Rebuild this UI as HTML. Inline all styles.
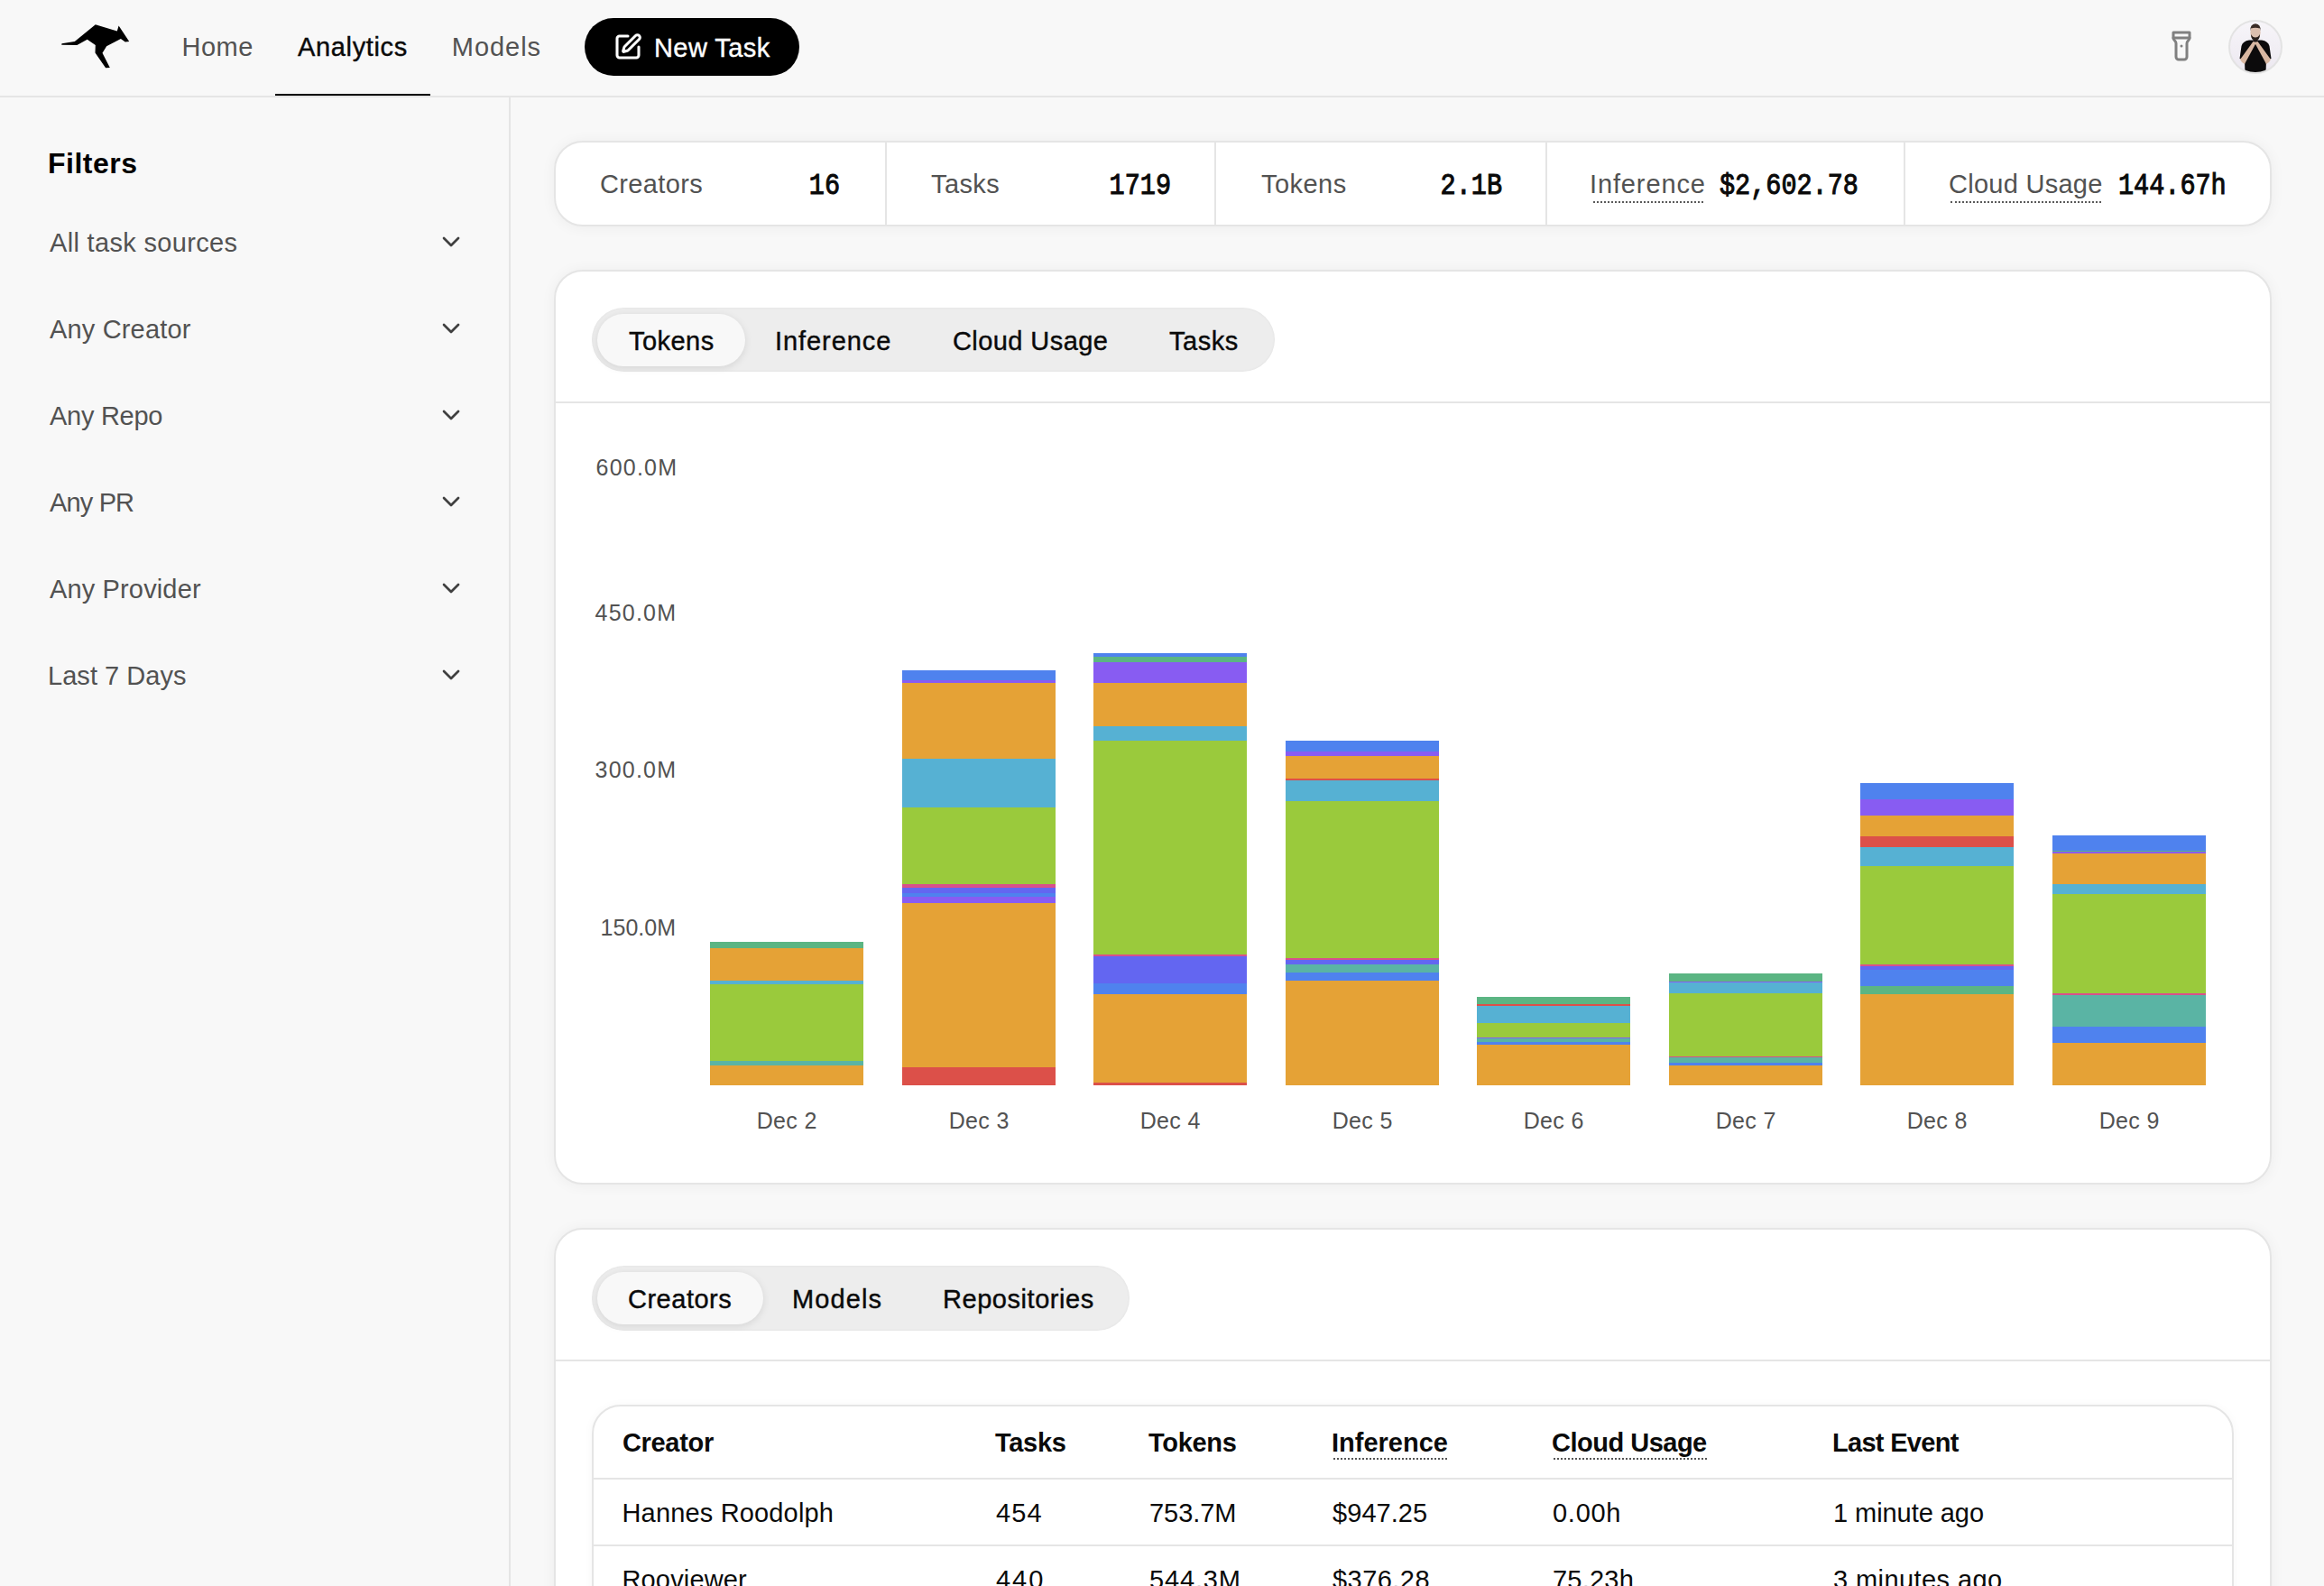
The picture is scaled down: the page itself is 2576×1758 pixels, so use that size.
<!DOCTYPE html>
<html><head><meta charset="utf-8"><style>
html,body{margin:0;padding:0;width:2576px;height:1758px;overflow:hidden;background:#f8f8f8;}
body{position:relative;font-family:'Liberation Sans', sans-serif;}
.t{position:absolute;white-space:nowrap;}
</style></head><body>
<div style="position:absolute;left:0px;top:106px;width:2576px;height:2px;background:#e5e5e5"></div>
<div style="position:absolute;left:564px;top:108px;width:2px;height:1650px;background:#e5e5e5"></div>
<svg style="position:absolute;left:0;top:0" width="200" height="100" viewBox="0 0 200 100"><path fill="#000" d="M68.1 49.2 L68.6 48.2 L82.8 45.9 L105.8 27.3 L129.8 34.5 L131.6 28.6 L143.2 46.1 L138.8 46.6 L133.9 43 L118.1 51.3 L113.5 58.8 L121.8 75 L117.1 75.3 L105.5 58.5 L105.8 50 L96.7 43.8 L85.4 50 L68.6 49.8 Z"/></svg>
<div class="t" style="left:201.5px;top:38.45px;font-size:29px;line-height:29px;color:#525252;font-weight:400;font-family:'Liberation Sans', sans-serif;letter-spacing:0.47px;">Home</div>
<div class="t" style="left:330px;top:38.45px;font-size:29px;line-height:29px;color:#0a0a0a;font-weight:400;font-family:'Liberation Sans', sans-serif;-webkit-text-stroke:0.4px #0a0a0a;letter-spacing:0.65px;">Analytics</div>
<div class="t" style="left:500.8px;top:38.45px;font-size:29px;line-height:29px;color:#525252;font-weight:400;font-family:'Liberation Sans', sans-serif;letter-spacing:0.96px;">Models</div>
<div style="position:absolute;left:305px;top:104px;width:172px;height:2px;background:#000"></div>
<div style="position:absolute;left:648px;top:20px;width:238px;height:64px;background:#000;border-radius:32px"></div>
<svg style="position:absolute;left:680px;top:36px" width="32" height="32" viewBox="0 0 24 24" fill="none" stroke="#fff" stroke-width="2.3" stroke-linecap="round" stroke-linejoin="round"><path d="M12 3H5a2 2 0 0 0-2 2v14a2 2 0 0 0 2 2h14a2 2 0 0 0 2-2v-7"/><path d="M18.375 2.625a1 1 0 0 1 3 3l-9.013 9.014a2 2 0 0 1-.853.505l-2.873.84a.5.5 0 0 1-.62-.62l.84-2.873a2 2 0 0 1 .506-.852z"/></svg>
<div class="t" style="left:725px;top:39.15px;font-size:29px;line-height:29px;color:#fff;font-weight:400;font-family:'Liberation Sans', sans-serif;-webkit-text-stroke:0.4px #fff;letter-spacing:0.43px;">New Task</div>
<svg style="position:absolute;left:2400px;top:33px" width="36" height="36" viewBox="0 0 24 24" fill="none" stroke="#808080" stroke-width="2" stroke-linecap="round" stroke-linejoin="round"><path d="M18 6c0 2-2 2-2 4v10a2 2 0 0 1-2 2h-4a2 2 0 0 1-2-2V10c0-2-2-2-2-4V2h12z"/><line x1="6" x2="18" y1="6" y2="6"/><line x1="12" x2="12" y1="12" y2="12"/></svg>
<svg style="position:absolute;left:2470px;top:22px" width="60" height="60" viewBox="0 0 60 60">
<defs><clipPath id="ac"><circle cx="30" cy="30" r="29"/></clipPath>
<linearGradient id="ag" x1="0" y1="0" x2="0" y2="1"><stop offset="0" stop-color="#f7f5f9"/><stop offset="1" stop-color="#ece8f0"/></linearGradient></defs>
<circle cx="30" cy="30" r="29" fill="url(#ag)"/>
<g clip-path="url(#ac)">
<path d="M14.5 29 Q16 23.5 23 22.5 L37 22.5 Q44 23.5 45.5 29 L47.5 43 L42 44.5 L41.5 60 L18.5 60 L18 44.5 L12.5 43 Z" fill="#0c0b0c"/>
<path d="M13 44 L27.5 24 L31 25 L18 49 Q15 48 13 44 Z" fill="#d9b8a2"/>
<path d="M47 44 L32.5 24 L29 25 L42 49 Q45 48 47 44 Z" fill="#d9b8a2"/>
<ellipse cx="30" cy="14" rx="5.6" ry="8.6" fill="#dcbfae"/>
<path d="M24.2 12.5 Q24 4.5 30 4.2 Q36 4.5 35.8 12.5 L35 9.5 Q30 8 25 9.5 Z" fill="#3a2c26"/>
<path d="M25 16 Q25 22.5 30 23.5 Q35 22.5 35 16 Q33 19.5 30 19.5 Q27 19.5 25 16 Z" fill="#2a201c"/>
</g>
<circle cx="30" cy="30" r="29" fill="none" stroke="#e3e3e3" stroke-width="2"/>
</svg>
<div class="t" style="left:53px;top:165.41px;font-size:32px;line-height:32px;color:#000;font-weight:700;font-family:'Liberation Sans', sans-serif;letter-spacing:0.5px;">Filters</div>
<div class="t" style="left:55px;top:255.05px;font-size:29px;line-height:29px;color:#525252;font-weight:400;font-family:'Liberation Sans', sans-serif;letter-spacing:0.33px;">All task sources</div>
<svg style="position:absolute;left:484px;top:252px" width="32" height="32" viewBox="0 0 24 24" fill="none" stroke="#404040" stroke-width="2" stroke-linecap="round" stroke-linejoin="round"><path d="m6 9 6 6 6-6"/></svg>
<div class="t" style="left:55px;top:351.05px;font-size:29px;line-height:29px;color:#525252;font-weight:400;font-family:'Liberation Sans', sans-serif;letter-spacing:0.16px;">Any Creator</div>
<svg style="position:absolute;left:484px;top:348px" width="32" height="32" viewBox="0 0 24 24" fill="none" stroke="#404040" stroke-width="2" stroke-linecap="round" stroke-linejoin="round"><path d="m6 9 6 6 6-6"/></svg>
<div class="t" style="left:55px;top:447.05px;font-size:29px;line-height:29px;color:#525252;font-weight:400;font-family:'Liberation Sans', sans-serif;letter-spacing:-0.28px;">Any Repo</div>
<svg style="position:absolute;left:484px;top:444px" width="32" height="32" viewBox="0 0 24 24" fill="none" stroke="#404040" stroke-width="2" stroke-linecap="round" stroke-linejoin="round"><path d="m6 9 6 6 6-6"/></svg>
<div class="t" style="left:55px;top:543.05px;font-size:29px;line-height:29px;color:#525252;font-weight:400;font-family:'Liberation Sans', sans-serif;letter-spacing:-0.85px;">Any PR</div>
<svg style="position:absolute;left:484px;top:540px" width="32" height="32" viewBox="0 0 24 24" fill="none" stroke="#404040" stroke-width="2" stroke-linecap="round" stroke-linejoin="round"><path d="m6 9 6 6 6-6"/></svg>
<div class="t" style="left:55px;top:639.05px;font-size:29px;line-height:29px;color:#525252;font-weight:400;font-family:'Liberation Sans', sans-serif;letter-spacing:0.14px;">Any Provider</div>
<svg style="position:absolute;left:484px;top:636px" width="32" height="32" viewBox="0 0 24 24" fill="none" stroke="#404040" stroke-width="2" stroke-linecap="round" stroke-linejoin="round"><path d="m6 9 6 6 6-6"/></svg>
<div class="t" style="left:53px;top:735.05px;font-size:29px;line-height:29px;color:#525252;font-weight:400;font-family:'Liberation Sans', sans-serif;letter-spacing:0.04px;">Last 7 Days</div>
<svg style="position:absolute;left:484px;top:732px" width="32" height="32" viewBox="0 0 24 24" fill="none" stroke="#404040" stroke-width="2" stroke-linecap="round" stroke-linejoin="round"><path d="m6 9 6 6 6-6"/></svg>
<div style="position:absolute;left:614px;top:156px;width:1904px;height:95px;background:#fff;border:2px solid #e5e5e5;border-radius:32px;box-sizing:border-box;box-shadow:0 1px 16px rgba(0,0,0,0.05)"></div>
<div style="position:absolute;left:981px;top:157px;width:2px;height:93px;background:#e5e5e5"></div>
<div style="position:absolute;left:1346px;top:157px;width:2px;height:93px;background:#e5e5e5"></div>
<div style="position:absolute;left:1713px;top:157px;width:2px;height:93px;background:#e5e5e5"></div>
<div style="position:absolute;left:2110px;top:157px;width:2px;height:93px;background:#e5e5e5"></div>
<div class="t" style="left:665px;top:190.45px;font-size:29px;line-height:29px;color:#525252;font-weight:400;font-family:'Liberation Sans', sans-serif;letter-spacing:0.37px;">Creators</div>
<div class="t" style="left:1032px;top:190.45px;font-size:29px;line-height:29px;color:#525252;font-weight:400;font-family:'Liberation Sans', sans-serif;letter-spacing:0.4px;">Tasks</div>
<div class="t" style="left:1398px;top:190.45px;font-size:29px;line-height:29px;color:#525252;font-weight:400;font-family:'Liberation Sans', sans-serif;letter-spacing:0.46px;">Tokens</div>
<div class="t" style="left:1762px;top:190.45px;font-size:29px;line-height:29px;color:#525252;font-weight:400;font-family:'Liberation Sans', sans-serif;letter-spacing:0.87px;">Inference</div>
<div class="t" style="left:2160px;top:190.45px;font-size:29px;line-height:29px;color:#525252;font-weight:400;font-family:'Liberation Sans', sans-serif;letter-spacing:0.27px;">Cloud Usage</div>
<div style="position:absolute;left:1766px;top:223px;width:122px;height:2px;border-top:2px dotted #5a5a5a;box-sizing:border-box"></div>
<div style="position:absolute;left:2162px;top:223px;width:167px;height:2px;border-top:2px dotted #5a5a5a;box-sizing:border-box"></div>
<div class="t" style="right:1645px;top:194.17px;font-size:28.5px;line-height:28.5px;color:#0a0a0a;font-weight:400;font-family:'Liberation Mono', monospace;-webkit-text-stroke:0.9px #0a0a0a;transform:scaleY(1.155);transform-origin:0 21.83px;">16</div>
<div class="t" style="right:1278px;top:194.17px;font-size:28.5px;line-height:28.5px;color:#0a0a0a;font-weight:400;font-family:'Liberation Mono', monospace;-webkit-text-stroke:0.9px #0a0a0a;transform:scaleY(1.155);transform-origin:0 21.83px;">1719</div>
<div class="t" style="right:911px;top:194.17px;font-size:28.5px;line-height:28.5px;color:#0a0a0a;font-weight:400;font-family:'Liberation Mono', monospace;-webkit-text-stroke:0.9px #0a0a0a;transform:scaleY(1.155);transform-origin:0 21.83px;">2.1B</div>
<div class="t" style="left:1906px;top:194.17px;font-size:28.5px;line-height:28.5px;color:#0a0a0a;font-weight:400;font-family:'Liberation Mono', monospace;-webkit-text-stroke:0.9px #0a0a0a;transform:scaleY(1.155);transform-origin:0 21.83px;">$2,602.78</div>
<div class="t" style="left:2348px;top:194.17px;font-size:28.5px;line-height:28.5px;color:#0a0a0a;font-weight:400;font-family:'Liberation Mono', monospace;-webkit-text-stroke:0.9px #0a0a0a;transform:scaleY(1.155);transform-origin:0 21.83px;">144.67h</div>
<div style="position:absolute;left:614px;top:299px;width:1904px;height:1014px;background:#fff;border:2px solid #e5e5e5;border-radius:32px;box-sizing:border-box;box-shadow:0 1px 16px rgba(0,0,0,0.05)"></div>
<div style="position:absolute;left:614px;top:445px;width:1904px;height:2px;background:#e5e5e5"></div>
<div style="position:absolute;left:656px;top:341px;width:757px;height:71px;background:#ededed;border-radius:36px;box-shadow:inset 0 0 3px rgba(0,0,0,0.06)"></div>
<div style="position:absolute;left:662px;top:348px;width:164px;height:58px;background:#f8f8f8;border-radius:29px;box-shadow:0 2px 9px rgba(0,0,0,0.10)"></div>
<div class="t" style="left:697px;top:364.05px;font-size:29px;line-height:29px;color:#0a0a0a;font-weight:400;font-family:'Liberation Sans', sans-serif;-webkit-text-stroke:0.4px #0a0a0a;letter-spacing:0.46px;">Tokens</div>
<div class="t" style="left:859px;top:364.05px;font-size:29px;line-height:29px;color:#0a0a0a;font-weight:400;font-family:'Liberation Sans', sans-serif;-webkit-text-stroke:0.4px #0a0a0a;letter-spacing:0.92px;">Inference</div>
<div class="t" style="left:1056px;top:364.05px;font-size:29px;line-height:29px;color:#0a0a0a;font-weight:400;font-family:'Liberation Sans', sans-serif;-webkit-text-stroke:0.4px #0a0a0a;letter-spacing:0.42px;">Cloud Usage</div>
<div class="t" style="left:1296px;top:364.05px;font-size:29px;line-height:29px;color:#0a0a0a;font-weight:400;font-family:'Liberation Sans', sans-serif;-webkit-text-stroke:0.4px #0a0a0a;letter-spacing:0.52px;">Tasks</div>
<div class="t" style="right:1824.8px;top:506.44px;font-size:25px;line-height:25px;color:#525252;font-weight:400;font-family:'Liberation Sans', sans-serif;letter-spacing:1.2px;">600.0M</div>
<div class="t" style="right:1825.8px;top:667.24px;font-size:25px;line-height:25px;color:#525252;font-weight:400;font-family:'Liberation Sans', sans-serif;letter-spacing:1.2px;">450.0M</div>
<div class="t" style="right:1825.8px;top:841.24px;font-size:25px;line-height:25px;color:#525252;font-weight:400;font-family:'Liberation Sans', sans-serif;letter-spacing:1.2px;">300.0M</div>
<div class="t" style="right:1827px;top:1015.84px;font-size:25px;line-height:25px;color:#525252;font-weight:400;font-family:'Liberation Sans', sans-serif;letter-spacing:0px;">150.0M</div>
<div style="position:absolute;left:787px;top:1044px;width:170px;height:7px;background:#5bb583"></div>
<div style="position:absolute;left:787px;top:1051px;width:170px;height:36px;background:#e5a236"></div>
<div style="position:absolute;left:787px;top:1087px;width:170px;height:4px;background:#56b1d3"></div>
<div style="position:absolute;left:787px;top:1091px;width:170px;height:85px;background:#9aca3c"></div>
<div style="position:absolute;left:787px;top:1176px;width:170px;height:5px;background:#5ab4a4"></div>
<div style="position:absolute;left:787px;top:1181px;width:170px;height:22px;background:#e5a236"></div>
<div style="position:absolute;left:1000px;top:743px;width:170px;height:11px;background:#4f82ee"></div>
<div style="position:absolute;left:1000px;top:754px;width:170px;height:3px;background:#885cf2"></div>
<div style="position:absolute;left:1000px;top:757px;width:170px;height:84px;background:#e5a236"></div>
<div style="position:absolute;left:1000px;top:841px;width:170px;height:54px;background:#56b1d3"></div>
<div style="position:absolute;left:1000px;top:895px;width:170px;height:85px;background:#9aca3c"></div>
<div style="position:absolute;left:1000px;top:980px;width:170px;height:4px;background:#d9508a"></div>
<div style="position:absolute;left:1000px;top:984px;width:170px;height:6px;background:#6366f1"></div>
<div style="position:absolute;left:1000px;top:990px;width:170px;height:4px;background:#4f82ee"></div>
<div style="position:absolute;left:1000px;top:994px;width:170px;height:7px;background:#885cf2"></div>
<div style="position:absolute;left:1000px;top:1001px;width:170px;height:182px;background:#e5a236"></div>
<div style="position:absolute;left:1000px;top:1183px;width:170px;height:20px;background:#dc5049"></div>
<div style="position:absolute;left:1212px;top:724px;width:170px;height:4px;background:#4f82ee"></div>
<div style="position:absolute;left:1212px;top:728px;width:170px;height:6px;background:#5bb583"></div>
<div style="position:absolute;left:1212px;top:734px;width:170px;height:23px;background:#885cf2"></div>
<div style="position:absolute;left:1212px;top:757px;width:170px;height:48px;background:#e5a236"></div>
<div style="position:absolute;left:1212px;top:805px;width:170px;height:16px;background:#56b1d3"></div>
<div style="position:absolute;left:1212px;top:821px;width:170px;height:237px;background:#9aca3c"></div>
<div style="position:absolute;left:1212px;top:1058px;width:170px;height:2px;background:#d9508a"></div>
<div style="position:absolute;left:1212px;top:1060px;width:170px;height:30px;background:#6366f1"></div>
<div style="position:absolute;left:1212px;top:1090px;width:170px;height:12px;background:#4f82ee"></div>
<div style="position:absolute;left:1212px;top:1102px;width:170px;height:98px;background:#e5a236"></div>
<div style="position:absolute;left:1212px;top:1200px;width:170px;height:3px;background:#dc5049"></div>
<div style="position:absolute;left:1425px;top:821px;width:170px;height:12px;background:#4f82ee"></div>
<div style="position:absolute;left:1425px;top:833px;width:170px;height:5px;background:#885cf2"></div>
<div style="position:absolute;left:1425px;top:838px;width:170px;height:25px;background:#e5a236"></div>
<div style="position:absolute;left:1425px;top:863px;width:170px;height:2px;background:#dc5049"></div>
<div style="position:absolute;left:1425px;top:865px;width:170px;height:23px;background:#56b1d3"></div>
<div style="position:absolute;left:1425px;top:888px;width:170px;height:174px;background:#9aca3c"></div>
<div style="position:absolute;left:1425px;top:1062px;width:170px;height:2px;background:#d9508a"></div>
<div style="position:absolute;left:1425px;top:1064px;width:170px;height:5px;background:#6366f1"></div>
<div style="position:absolute;left:1425px;top:1069px;width:170px;height:9px;background:#5ab4a4"></div>
<div style="position:absolute;left:1425px;top:1078px;width:170px;height:9px;background:#4f82ee"></div>
<div style="position:absolute;left:1425px;top:1087px;width:170px;height:116px;background:#e5a236"></div>
<div style="position:absolute;left:1637px;top:1105px;width:170px;height:8px;background:#5bb583"></div>
<div style="position:absolute;left:1637px;top:1113px;width:170px;height:2px;background:#dc5049"></div>
<div style="position:absolute;left:1637px;top:1115px;width:170px;height:19px;background:#56b1d3"></div>
<div style="position:absolute;left:1637px;top:1134px;width:170px;height:16px;background:#9aca3c"></div>
<div style="position:absolute;left:1637px;top:1150px;width:170px;height:1px;background:#885cf2"></div>
<div style="position:absolute;left:1637px;top:1151px;width:170px;height:4px;background:#5ab4a4"></div>
<div style="position:absolute;left:1637px;top:1155px;width:170px;height:3px;background:#4f82ee"></div>
<div style="position:absolute;left:1637px;top:1158px;width:170px;height:45px;background:#e5a236"></div>
<div style="position:absolute;left:1850px;top:1079px;width:170px;height:9px;background:#5bb583"></div>
<div style="position:absolute;left:1850px;top:1088px;width:170px;height:1px;background:#885cf2"></div>
<div style="position:absolute;left:1850px;top:1089px;width:170px;height:12px;background:#56b1d3"></div>
<div style="position:absolute;left:1850px;top:1101px;width:170px;height:70px;background:#9aca3c"></div>
<div style="position:absolute;left:1850px;top:1171px;width:170px;height:1px;background:#d9508a"></div>
<div style="position:absolute;left:1850px;top:1172px;width:170px;height:6px;background:#5ab4a4"></div>
<div style="position:absolute;left:1850px;top:1178px;width:170px;height:3px;background:#4f82ee"></div>
<div style="position:absolute;left:1850px;top:1181px;width:170px;height:22px;background:#e5a236"></div>
<div style="position:absolute;left:2062px;top:868px;width:170px;height:18px;background:#4f82ee"></div>
<div style="position:absolute;left:2062px;top:886px;width:170px;height:18px;background:#885cf2"></div>
<div style="position:absolute;left:2062px;top:904px;width:170px;height:23px;background:#e5a236"></div>
<div style="position:absolute;left:2062px;top:927px;width:170px;height:12px;background:#dc5049"></div>
<div style="position:absolute;left:2062px;top:939px;width:170px;height:21px;background:#56b1d3"></div>
<div style="position:absolute;left:2062px;top:960px;width:170px;height:109px;background:#9aca3c"></div>
<div style="position:absolute;left:2062px;top:1069px;width:170px;height:2px;background:#d9508a"></div>
<div style="position:absolute;left:2062px;top:1071px;width:170px;height:4px;background:#6366f1"></div>
<div style="position:absolute;left:2062px;top:1075px;width:170px;height:18px;background:#4f82ee"></div>
<div style="position:absolute;left:2062px;top:1093px;width:170px;height:9px;background:#5bb583"></div>
<div style="position:absolute;left:2062px;top:1102px;width:170px;height:101px;background:#e5a236"></div>
<div style="position:absolute;left:2275px;top:926px;width:170px;height:17px;background:#4f82ee"></div>
<div style="position:absolute;left:2275px;top:943px;width:170px;height:1px;background:#5bb583"></div>
<div style="position:absolute;left:2275px;top:944px;width:170px;height:2px;background:#885cf2"></div>
<div style="position:absolute;left:2275px;top:946px;width:170px;height:34px;background:#e5a236"></div>
<div style="position:absolute;left:2275px;top:980px;width:170px;height:11px;background:#56b1d3"></div>
<div style="position:absolute;left:2275px;top:991px;width:170px;height:110px;background:#9aca3c"></div>
<div style="position:absolute;left:2275px;top:1101px;width:170px;height:2px;background:#d9508a"></div>
<div style="position:absolute;left:2275px;top:1103px;width:170px;height:35px;background:#5ab4a4"></div>
<div style="position:absolute;left:2275px;top:1138px;width:170px;height:18px;background:#4f82ee"></div>
<div style="position:absolute;left:2275px;top:1156px;width:170px;height:47px;background:#e5a236"></div>
<div class="t" style="left:572.165px;width:600px;text-align:center;top:1229.84px;font-size:25px;line-height:25px;color:#525252;font-weight:400;font-family:'Liberation Sans', sans-serif;letter-spacing:0.33px;">Dec 2</div>
<div class="t" style="left:785.165px;width:600px;text-align:center;top:1229.84px;font-size:25px;line-height:25px;color:#525252;font-weight:400;font-family:'Liberation Sans', sans-serif;letter-spacing:0.33px;">Dec 3</div>
<div class="t" style="left:997.165px;width:600px;text-align:center;top:1229.84px;font-size:25px;line-height:25px;color:#525252;font-weight:400;font-family:'Liberation Sans', sans-serif;letter-spacing:0.33px;">Dec 4</div>
<div class="t" style="left:1210.165px;width:600px;text-align:center;top:1229.84px;font-size:25px;line-height:25px;color:#525252;font-weight:400;font-family:'Liberation Sans', sans-serif;letter-spacing:0.33px;">Dec 5</div>
<div class="t" style="left:1422.165px;width:600px;text-align:center;top:1229.84px;font-size:25px;line-height:25px;color:#525252;font-weight:400;font-family:'Liberation Sans', sans-serif;letter-spacing:0.33px;">Dec 6</div>
<div class="t" style="left:1635.165px;width:600px;text-align:center;top:1229.84px;font-size:25px;line-height:25px;color:#525252;font-weight:400;font-family:'Liberation Sans', sans-serif;letter-spacing:0.33px;">Dec 7</div>
<div class="t" style="left:1847.165px;width:600px;text-align:center;top:1229.84px;font-size:25px;line-height:25px;color:#525252;font-weight:400;font-family:'Liberation Sans', sans-serif;letter-spacing:0.33px;">Dec 8</div>
<div class="t" style="left:2060.165px;width:600px;text-align:center;top:1229.84px;font-size:25px;line-height:25px;color:#525252;font-weight:400;font-family:'Liberation Sans', sans-serif;letter-spacing:0.33px;">Dec 9</div>
<div style="position:absolute;left:614px;top:1361px;width:1904px;height:500px;background:#fff;border:2px solid #e5e5e5;border-radius:32px;box-sizing:border-box;box-shadow:0 1px 16px rgba(0,0,0,0.05)"></div>
<div style="position:absolute;left:614px;top:1507px;width:1904px;height:2px;background:#e5e5e5"></div>
<div style="position:absolute;left:656px;top:1403px;width:596px;height:72px;background:#ededed;border-radius:36px;box-shadow:inset 0 0 3px rgba(0,0,0,0.06)"></div>
<div style="position:absolute;left:662px;top:1410px;width:184px;height:58px;background:#f8f8f8;border-radius:29px;box-shadow:0 2px 9px rgba(0,0,0,0.10)"></div>
<div class="t" style="left:696px;top:1426.05px;font-size:29px;line-height:29px;color:#0a0a0a;font-weight:400;font-family:'Liberation Sans', sans-serif;-webkit-text-stroke:0.4px #0a0a0a;letter-spacing:0.51px;">Creators</div>
<div class="t" style="left:878px;top:1426.05px;font-size:29px;line-height:29px;color:#0a0a0a;font-weight:400;font-family:'Liberation Sans', sans-serif;-webkit-text-stroke:0.4px #0a0a0a;letter-spacing:1.1px;">Models</div>
<div class="t" style="left:1045px;top:1426.05px;font-size:29px;line-height:29px;color:#0a0a0a;font-weight:400;font-family:'Liberation Sans', sans-serif;-webkit-text-stroke:0.4px #0a0a0a;letter-spacing:0.55px;">Repositories</div>
<div style="position:absolute;left:656px;top:1557px;width:1820px;height:400px;background:#fff;border:2px solid #e5e5e5;border-radius:32px;box-sizing:border-box;box-shadow:0 1px 12px rgba(0,0,0,0.035)"></div>
<div style="position:absolute;left:656px;top:1638px;width:1820px;height:2px;background:#e5e5e5"></div>
<div style="position:absolute;left:656px;top:1712px;width:1820px;height:2px;background:#e5e5e5"></div>
<div class="t" style="left:690px;top:1585.05px;font-size:29px;line-height:29px;color:#0a0a0a;font-weight:700;font-family:'Liberation Sans', sans-serif;letter-spacing:-0.33px;">Creator</div>
<div class="t" style="left:1103px;top:1585.05px;font-size:29px;line-height:29px;color:#0a0a0a;font-weight:700;font-family:'Liberation Sans', sans-serif;letter-spacing:-0.3px;">Tasks</div>
<div class="t" style="left:1273px;top:1585.05px;font-size:29px;line-height:29px;color:#0a0a0a;font-weight:700;font-family:'Liberation Sans', sans-serif;letter-spacing:-0.3px;">Tokens</div>
<div class="t" style="left:1476px;top:1585.05px;font-size:29px;line-height:29px;color:#0a0a0a;font-weight:700;font-family:'Liberation Sans', sans-serif;letter-spacing:0px;">Inference</div>
<div class="t" style="left:1720px;top:1585.05px;font-size:29px;line-height:29px;color:#0a0a0a;font-weight:700;font-family:'Liberation Sans', sans-serif;letter-spacing:-0.5px;">Cloud Usage</div>
<div class="t" style="left:2031px;top:1585.05px;font-size:29px;line-height:29px;color:#0a0a0a;font-weight:700;font-family:'Liberation Sans', sans-serif;letter-spacing:-0.7px;">Last Event</div>
<div style="position:absolute;left:1478px;top:1616px;width:126px;height:2px;border-top:2px dotted #555;box-sizing:border-box"></div>
<div style="position:absolute;left:1722px;top:1616px;width:170px;height:2px;border-top:2px dotted #555;box-sizing:border-box"></div>
<div class="t" style="left:689.5px;top:1663.45px;font-size:29px;line-height:29px;color:#0a0a0a;font-weight:400;font-family:'Liberation Sans', sans-serif;letter-spacing:0.16px;">Hannes Roodolph</div>
<div class="t" style="left:1104px;top:1663.45px;font-size:29px;line-height:29px;color:#0a0a0a;font-weight:400;font-family:'Liberation Sans', sans-serif;letter-spacing:1.14px;">454</div>
<div class="t" style="left:1274px;top:1663.45px;font-size:29px;line-height:29px;color:#0a0a0a;font-weight:400;font-family:'Liberation Sans', sans-serif;letter-spacing:-0.05px;">753.7M</div>
<div class="t" style="left:1477px;top:1663.45px;font-size:29px;line-height:29px;color:#0a0a0a;font-weight:400;font-family:'Liberation Sans', sans-serif;letter-spacing:0.06px;">$947.25</div>
<div class="t" style="left:1721px;top:1663.45px;font-size:29px;line-height:29px;color:#0a0a0a;font-weight:400;font-family:'Liberation Sans', sans-serif;letter-spacing:0.72px;">0.00h</div>
<div class="t" style="left:2032px;top:1663.45px;font-size:29px;line-height:29px;color:#0a0a0a;font-weight:400;font-family:'Liberation Sans', sans-serif;letter-spacing:-0.06px;">1 minute ago</div>
<div class="t" style="left:689.5px;top:1737.45px;font-size:29px;line-height:29px;color:#0a0a0a;font-weight:400;font-family:'Liberation Sans', sans-serif;letter-spacing:0.15px;">Rooviewer</div>
<div class="t" style="left:1104px;top:1737.45px;font-size:29px;line-height:29px;color:#0a0a0a;font-weight:400;font-family:'Liberation Sans', sans-serif;letter-spacing:1.99px;">440</div>
<div class="t" style="left:1274px;top:1737.45px;font-size:29px;line-height:29px;color:#0a0a0a;font-weight:400;font-family:'Liberation Sans', sans-serif;letter-spacing:0.83px;">544.3M</div>
<div class="t" style="left:1477px;top:1737.45px;font-size:29px;line-height:29px;color:#0a0a0a;font-weight:400;font-family:'Liberation Sans', sans-serif;letter-spacing:0.46px;">$376.28</div>
<div class="t" style="left:1721px;top:1737.45px;font-size:29px;line-height:29px;color:#0a0a0a;font-weight:400;font-family:'Liberation Sans', sans-serif;letter-spacing:0.23px;">75.23h</div>
<div class="t" style="left:2032px;top:1737.45px;font-size:29px;line-height:29px;color:#0a0a0a;font-weight:400;font-family:'Liberation Sans', sans-serif;letter-spacing:0.41px;">3 minutes ago</div>
</body></html>
